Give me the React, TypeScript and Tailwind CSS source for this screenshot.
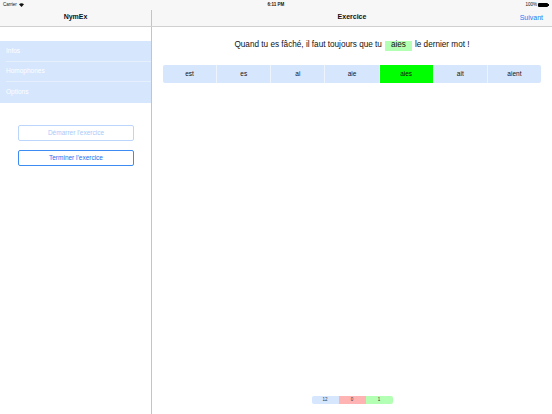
// Exercice d'homophones : vue maître / détail façon iPad
const FONT = { fontFamily: '"Liberation Sans", Arial, sans-serif' }

const choices = ['est', 'es', 'ai', 'aie', 'aies', 'ait', 'aient']
const answer = 'aies'

function Wifi() {
  return (
    <svg width="5" height="4" viewBox="0 0 10 8">
      <path d="M5 8 L0 2.5 A7.5 7.5 0 0 1 10 2.5 Z" fill="#111" />
    </svg>
  )
}

function Battery() {
  return (
    <div className="flex items-center">
      <div className="w-[10px] h-[4px] rounded-[1px] bg-black" />
      <div className="w-[1px] h-[2px] bg-black" />
    </div>
  )
}

export default function App() {
  return (
    <div className="w-[552px] h-[414px] bg-white flex flex-col overflow-hidden text-[#111]" style={FONT}>
      {/* barre d'état + barres de navigation */}
      <div className="bg-[#f7f7f7] border-b border-[#d0d0d0] h-[27px] flex flex-col">
        <div className="h-[10px] flex items-center justify-between px-[3px] text-[4.5px]">
          <div className="flex items-center gap-[2px] w-[60px]">
            <span>Carrier</span>
            <Wifi />
          </div>
          <span className="font-bold">6:11 PM</span>
          <div className="flex items-center justify-end gap-[1px] w-[60px]">
            <span>100%</span>
            <Battery />
          </div>
        </div>
        <div className="flex flex-1">
          <div className="w-[151px] flex items-center justify-center text-[7px] font-bold pb-[2px]">NymEx</div>
          <div className="w-[1px] bg-[#c4c4c4]" />
          <div className="flex-1 relative flex items-center justify-center text-[7px] font-bold pb-[2px]">
            Exercice
            <span className="absolute right-[9px] top-[3px] font-normal text-[#1a7cf5]">Suivant</span>
          </div>
        </div>
      </div>

      <div className="flex flex-1">
        {/* colonne maître */}
        <div className="w-[151px] flex flex-col pt-[14px]">
          <div className="bg-[#d6e6fd]">
            {['Infos', 'Homophones', 'Options'].map((item, i) => (
              <div key={item} className="pl-[6px]">
                <div className={`h-[20.5px] flex items-center text-[6.5px] text-white ${i < 2 ? 'border-b border-[#e6effc]' : ''}`}>
                  {item}
                </div>
              </div>
            ))}
          </div>
          <div className="flex flex-col items-center gap-[9px] mt-[22px] pl-[1px]">
            <div className="w-[116px] h-[16px] rounded-[2px] border border-[#bcd6fb] text-[#a9c9f8] text-[6.5px] flex items-center justify-center">
              Démarrer l'exercice
            </div>
            <div className="w-[116px] h-[16px] rounded-[2px] border border-[#3d8cf4] text-[#1a6ff0] text-[6.5px] flex items-center justify-center">
              Terminer l'exercice
            </div>
          </div>
        </div>

        <div className="w-[1px] bg-[#c4c4c4]" />

        {/* détail */}
        <div className="flex-1 flex flex-col items-center">
          <div className="mt-[13px] flex items-center text-[8.2px] h-[11px]">
            <span>Quand tu es fâché, il faut toujours que tu</span>
            <span className="mx-[3px] bg-[#b3ffb3] px-[6px] h-[10px] flex items-center">aies</span>
            <span>le dernier mot !</span>
          </div>

          <div className="mt-[14px] w-[378px] h-[18px] flex rounded-[2px] overflow-hidden bg-[#d6e6fd]">
            {choices.map((c, i) => (
              <div
                key={c}
                className={`flex-1 flex items-center justify-center text-[6.5px] ${i > 0 ? 'border-l border-[#eef4fe]' : ''} ${c === answer ? 'bg-[#00ff00]' : ''}`}
              >
                {c}
              </div>
            ))}
          </div>

          <div className="flex-1" />

          {/* compteurs */}
          <div className="mb-[10px] flex h-[8px] w-[81px] rounded-[2px] overflow-hidden text-[4.5px] text-[#333]">
            <div className="flex-1 bg-[#d6e6fd] flex items-center justify-center">12</div>
            <div className="flex-1 bg-[#ffb3b3] flex items-center justify-center">0</div>
            <div className="flex-1 bg-[#b3ffb3] flex items-center justify-center">1</div>
          </div>
        </div>
      </div>
    </div>
  )
}
